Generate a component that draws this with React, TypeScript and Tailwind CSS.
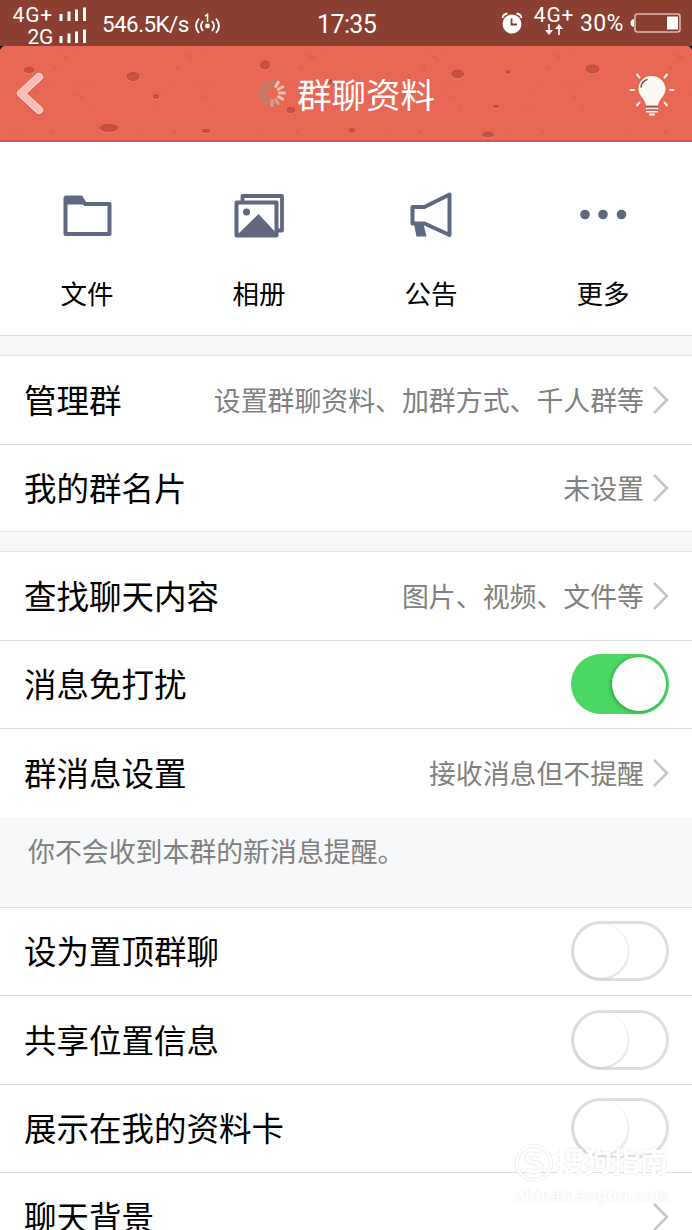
import type { ReactNode } from "react"

interface RowProps {
  label: string
  value?: string
  toggle?: boolean
  checked?: boolean
  last?: boolean
  className: string
}

function SignalBars() {
  return (
    <svg width="28" height="16" viewBox="0 0 28 16" fill="#fff">
      <rect x="0.5" y="7" width="3" height="7" />
      <rect x="8.5" y="4.5" width="3" height="9.5" />
      <rect x="16" y="2.5" width="3" height="11.5" />
      <rect x="24" y="0.5" width="3" height="13.5" />
    </svg>
  )
}

function HotspotIcon() {
  return (
    <svg width="28" height="24" viewBox="0 0 28 24" fill="none" stroke="#fff" strokeWidth="1.8" className="ml-[4px]">
      <path d="M5 6.5Q-1 14 5 21M9 9Q5 14 9 19M22 6.5Q28 14 22 21M18 9Q22 14 18 19" />
      <path d="M11 4L13.5 2.5V10" strokeWidth="1.6" />
      <circle cx="13.5" cy="14" r="2.4" fill="#fff" stroke="none" />
    </svg>
  )
}

function AlarmIcon() {
  return (
    <svg width="22" height="24" viewBox="0 0 22 24" fill="none" stroke="#fff" strokeWidth="1.8">
      <circle cx="11" cy="13" r="9.5" fill="#fff" stroke="none" />
      <path d="M1.5 7Q2 3 6.5 2.5M20.5 7Q20 3 15.5 2.5" />
      <path d="M10.5 7.5V13.5H16" stroke="#8a3f31" />
    </svg>
  )
}

function StatusBar() {
  return (
    <div className="flex h-[46px] shrink-0 items-start bg-[#8a3f31] text-white">
      <div className="flex w-[87px] flex-col items-end pt-[4px]">
        <div className="flex h-[22px] items-center gap-[6px]">
          <span className="text-[21px] leading-[22px] tracking-[0.8px]">4G+</span>
          <SignalBars />
        </div>
        <div className="flex h-[22px] items-center gap-[6px]">
          <span className="text-[21px] leading-[22px] tracking-[-0.3px]">2G</span>
          <SignalBars />
        </div>
      </div>
      <div className="flex w-[230px] items-center pt-[12px] pl-[15px]">
        <span className="w-[88px] text-[22.5px] leading-[24px] tracking-[-0.6px] whitespace-nowrap">546.5K/s</span>
        <HotspotIcon />
      </div>
      <div className="w-[184px] pt-[13px] text-[25px] leading-[24px] tracking-[-0.6px]">17:35</div>
      <div className="flex items-start">
        <div className="pt-[11px]">
          <AlarmIcon />
        </div>
        <div className="ml-[10px] flex w-[42px] flex-col items-center pt-[5px]">
          <span className="text-[21px] leading-[20px] tracking-[0.8px]">4G+</span>
          <svg width="18" height="11" viewBox="0 0 18 11" fill="#fff" className="-mt-[1px]">
            <path d="M3.2 0H4.8V6H8L4 11L0 6H3.2ZM13.2 11H14.8V5H18L14 0L10 5H13.2Z" />
          </svg>
        </div>
        <span className="ml-[5px] w-[50px] pt-[12px] text-[23px] leading-[24px] tracking-[0.3px]">30%</span>
        <svg width="52" height="22" viewBox="0 0 52 22" className="mt-[12px]">
          <path d="M4 7Q0.5 7.5 0.5 11Q0.5 14.5 4 15Z" fill="#fff" />
          <rect x="5" y="2" width="45" height="18" rx="2.5" fill="none" stroke="#dfb9b0" strokeWidth="1.6" />
          <rect x="37" y="4.5" width="11" height="13" fill="#fff" />
        </svg>
      </div>
    </div>
  )
}

const pores = [
  [29, 24, 5.5, 3.3],
  [133, 30.5, 6.5, 4.5],
  [156, 50.5, 3, 2.5],
  [109, 82, 9.5, 4],
  [206, 85, 4.5, 2],
  [265, 19, 5, 4.5],
  [291, 64, 4.5, 3],
  [330, 36, 2.5, 2.5],
  [352, 84.5, 3.2, 2.5],
  [457.5, 28, 6.5, 4.3],
  [508, 26, 2.5, 2],
  [496, 60.5, 3, 1.7],
  [488, 88.5, 6, 3],
  [592.5, 23, 7, 4.5],
]

// The sponge pattern repeats every 123px
const tiles = [0, 123, 246, 369, 492, 615]

function SpongeTexture() {
  return (
    <svg className="absolute inset-0" width="692" height="94" viewBox="0 0 692 94">
      {tiles.map(x => (
        <g key={x} transform={`translate(${x} 0)`} fill="#d95f4e" stroke="none" opacity="0.65">
          <path d="M60 8L67 10L70 14L64 12ZM77 4L79 8L78 9ZM52 20L56 21L54 23ZM73 47L84 51L85 53L79 51ZM34 45L42 48L35 47Z" />
          <path d="M9 87Q14 91 23 88M68 38Q84 35 96 41M25 65Q39 63 47 68" fill="none" stroke="#de6452" opacity="0.5" />
          <circle cx="56" cy="23" r="1.5" />
          <circle cx="50" cy="38" r="1.3" />
          <circle cx="91" cy="60" r="1.3" />
          <circle cx="51" cy="86" r="1.5" />
          <circle cx="18" cy="28" r="1" />
        </g>
      ))}
      {pores.map(([x, y, rx, ry]) => (
        <g key={x}>
          <ellipse cx={x} cy={y + 0.8} rx={rx + 0.5} ry={ry + 0.3} fill="#f07d6a" />
          <ellipse cx={x} cy={y} rx={rx} ry={ry} fill="#bd4d3d" />
          <ellipse cx={x} cy={y + 0.5} rx={rx - 1} ry={ry - 1} fill="#c95141" />
        </g>
      ))}
      <path d="M0 0H4Q1 1 0 4ZM692 0H688Q691 1 692 4Z" fill="#210b08" />
    </svg>
  )
}

const spokes = [0, 30, 60, 90, 120, 150, 180, 210, 240, 270, 300, 330]

function Header() {
  return (
    <div className="relative h-[96px] shrink-0 border-b-2 border-[#cf5c52] bg-[#e96755]">
      <SpongeTexture />
      <div className="relative flex h-[94px] items-center">
        <svg width="32" height="48" viewBox="0 0 32 48" className="ml-[14px]" fill="none" strokeLinecap="round" strokeLinejoin="round">
          <path d="M25 9L7 25.500L25 42" stroke="#c9584a" strokeWidth="8" />
          <path d="M25 8L7 24.500L25 41" stroke="#ffdcd3" strokeWidth="8" />
          <path d="M25 8L7 24.500L25 41" stroke="#fabdb5" strokeWidth="6" />
        </svg>
        <svg width="30" height="30" viewBox="-15 -15 30 30" className="ml-[211px]">
          {spokes.map(deg => (
            <path
              key={deg}
              d="M0 -7.5V-12.5"
              transform={`rotate(${deg})`}
              stroke={deg > 15 && deg < 130 ? "#eec2b0" : deg < 200 && deg > 15 ? "#cfa491" : "#ad8374"}
              strokeWidth="3"
              strokeLinecap="round"
            />
          ))}
        </svg>
        <h1 className="ml-[10px] w-[331px] pt-[6px] text-[34.5px] leading-[40px] font-normal text-white">群聊资料</h1>
        <svg width="48" height="46" viewBox="0 0 48 46" fill="none" stroke="#fff4ed" strokeWidth="2" strokeLinecap="round">
          <path d="M9 4.5L11.5 7.5M39 4.5L36.5 7.5M2.5 20H6M42 20H45.5M9 35.5L11.5 32.5M39 35.5L36.5 32.5" />
          <path d="M23.5 6C15.5 6 10.5 12 10.5 19C10.5 26 17 28.5 18 35.5H30C31 28.5 37.5 26 37.5 19C37.5 12 31.5 6 23.5 6Z" fill="#fff9f5" stroke="none" />
          <path d="M13 17Q14 11 19 9.5" stroke="#80584f" strokeWidth="1.6" />
          <path d="M18.5 38.5H29.5M19 41.5H29M22 44.5H26" strokeWidth="2" />
          <path d="M18 36.8H30M19 40H29" stroke="#8f4337" strokeWidth="1" />
        </svg>
      </div>
    </div>
  )
}

function Shortcut({ label, children }: { label: string; children: ReactNode }) {
  return (
    <div className="flex w-[172px] flex-col items-center pt-[47px]">
      <svg width="54" height="52" viewBox="0 0 54 52" fill="none" stroke="#5f6880" strokeWidth="4" strokeLinejoin="round">
        {children}
      </svg>
      <span className="mt-[35px] -translate-x-px text-[26.5px] leading-[38px] text-black">{label}</span>
    </div>
  )
}

function Shortcuts() {
  return (
    <div className="flex h-[194px] shrink-0 border-b border-[#d5dadd] bg-white pl-[2px]">
      <Shortcut label="文件">
        <path d="M4.5 9V45H48.5V15H24L20 8.5H5Z" />
        <path d="M4 8H21L24.5 15.5H4Z" fill="#5f6880" stroke="none" />
      </Shortcut>
      <Shortcut label="相册">
        <path d="M9.5 12.5V7H49V41.5H45" strokeWidth="3.8" />
        <path d="M3.5 13.5H43.5V46.5H3.5Z" />
        <circle cx="13.5" cy="23" r="3.5" fill="#5f6880" stroke="none" />
        <path d="M4 46L25.5 25L45 46Z" fill="#5f6880" stroke="none" />
      </Shortcut>
      <Shortcut label="公告">
        <path d="M7.500 18H19.500L44.500 5.500V46L19.500 34.500H7.500Z" />
        <path d="M9 35L11.5 47.500H21.5L18.5 35Z" fill="#5f6880" stroke="none" />
      </Shortcut>
      <Shortcut label="更多">
        <g fill="#5f6880" stroke="none">
          <circle cx="8" cy="25.5" r="4.8" />
          <circle cx="26" cy="25.5" r="4.8" />
          <circle cx="44.5" cy="25.5" r="4.8" />
        </g>
      </Shortcut>
    </div>
  )
}

function Toggle({ checked }: { checked?: boolean }) {
  if (checked) {
    return (
      <div className="mb-[2px] flex h-[60px] w-[98px] items-center justify-end rounded-full bg-[#4bd763] pr-[3px]">
        <div className="h-[54px] w-[54px] rounded-full bg-white shadow-[-1px_1px_4px_#259c3e]" />
      </div>
    )
  }
  return (
    <div className="mb-[1px] flex h-[60px] w-[98px] items-center rounded-full border-[3px] border-[#dfdfdf] bg-white">
      <div className="h-[54px] w-[54px] rounded-full bg-white shadow-[0_1px_3px_#c5c5c5]" />
    </div>
  )
}

function Row({ label, value, toggle, checked, last, className }: RowProps) {
  return (
    <div className={`flex shrink-0 items-center bg-white pr-[23px] pl-[24px] ${last ? "" : "border-b border-[#dcdee0]"} ${className}`}>
      <span className="flex-1 pt-[3px] text-[32.5px] leading-[46px] whitespace-nowrap text-black">{label}</span>
      {toggle ? (
        <Toggle checked={checked} />
      ) : (
        <>
          {value && <span className="pt-[4px] text-[26.9px] leading-[38px] whitespace-nowrap text-[#808080]">{value}</span>}
          <svg width="16" height="28" viewBox="0 0 16 28" fill="none" stroke="#c4c5c7" strokeWidth="2.5" className="ml-[9px]">
            <path d="M1 1L14 14L1 27" />
          </svg>
        </>
      )}
    </div>
  )
}

function Watermark() {
  return (
    <div className="absolute top-[1142px] left-[514px] flex w-[160px] flex-col text-white [text-shadow:0_0_2px_#dcdcdc]">
      <div className="flex h-[42px] items-center gap-[2px]">
        <svg width="40" height="40" viewBox="0 0 40 40" fill="none" stroke="#ededed">
          <circle cx="20" cy="20" r="17" strokeWidth="4" />
          <circle cx="20" cy="20" r="17" stroke="#fff" strokeWidth="2.5" />
          <path d="M28 13Q13 8 13 15C13 21 27 18 27 25Q26 31 12 27" strokeWidth="5" />
          <path d="M28 13Q13 8 13 15C13 21 27 18 27 25Q26 31 12 27" stroke="#fff" strokeWidth="3.5" />
        </svg>
        <span className="text-[28px] leading-[40px] font-bold">搜狗指南</span>
      </div>
      <span className="pl-[2px] font-['Liberation_Sans'] text-[16px] leading-[24px] font-bold tracking-[0.8px] whitespace-nowrap">zhinan.sogou.com</span>
    </div>
  )
}

export default function App() {
  return (
    <div className="relative flex h-[1230px] w-[692px] flex-col overflow-hidden bg-[#f6f8fa] font-['Roboto','Noto_Sans_CJK_SC',sans-serif]">
      <StatusBar />
      <Header />
      <Shortcuts />

      <div className="mt-[19px] shrink-0 border-y border-[#e3e6e9]">
        <Row label="管理群" value="设置群聊资料、加群方式、千人群等" className="h-[89px]" />
        <Row label="我的群名片" value="未设置" last className="h-[86px]" />
      </div>

      <div className="mt-[19px] shrink-0 border-t border-[#e3e6e9]">
        <Row label="查找聊天内容" value="图片、视频、文件等" className="h-[89px]" />
        <Row label="消息免打扰" toggle checked className="h-[88px]" />
        <Row label="群消息设置" value="接收消息但不提醒" last className="h-[88px]" />
      </div>

      <p className="h-[91px] shrink-0 border-b border-[#dcdfe1] pt-[17px] pl-[28px] text-[26.9px] leading-[38px] text-[#808080]">
        你不会收到本群的新消息提醒。
      </p>

      <Row label="设为置顶群聊" toggle className="h-[88px]" />
      <Row label="共享位置信息" toggle className="h-[89px]" />
      <Row label="展示在我的资料卡" toggle className="h-[88px]" />
      <Row label="聊天背景" last className="h-[88px]" />

      <Watermark />
    </div>
  )
}
